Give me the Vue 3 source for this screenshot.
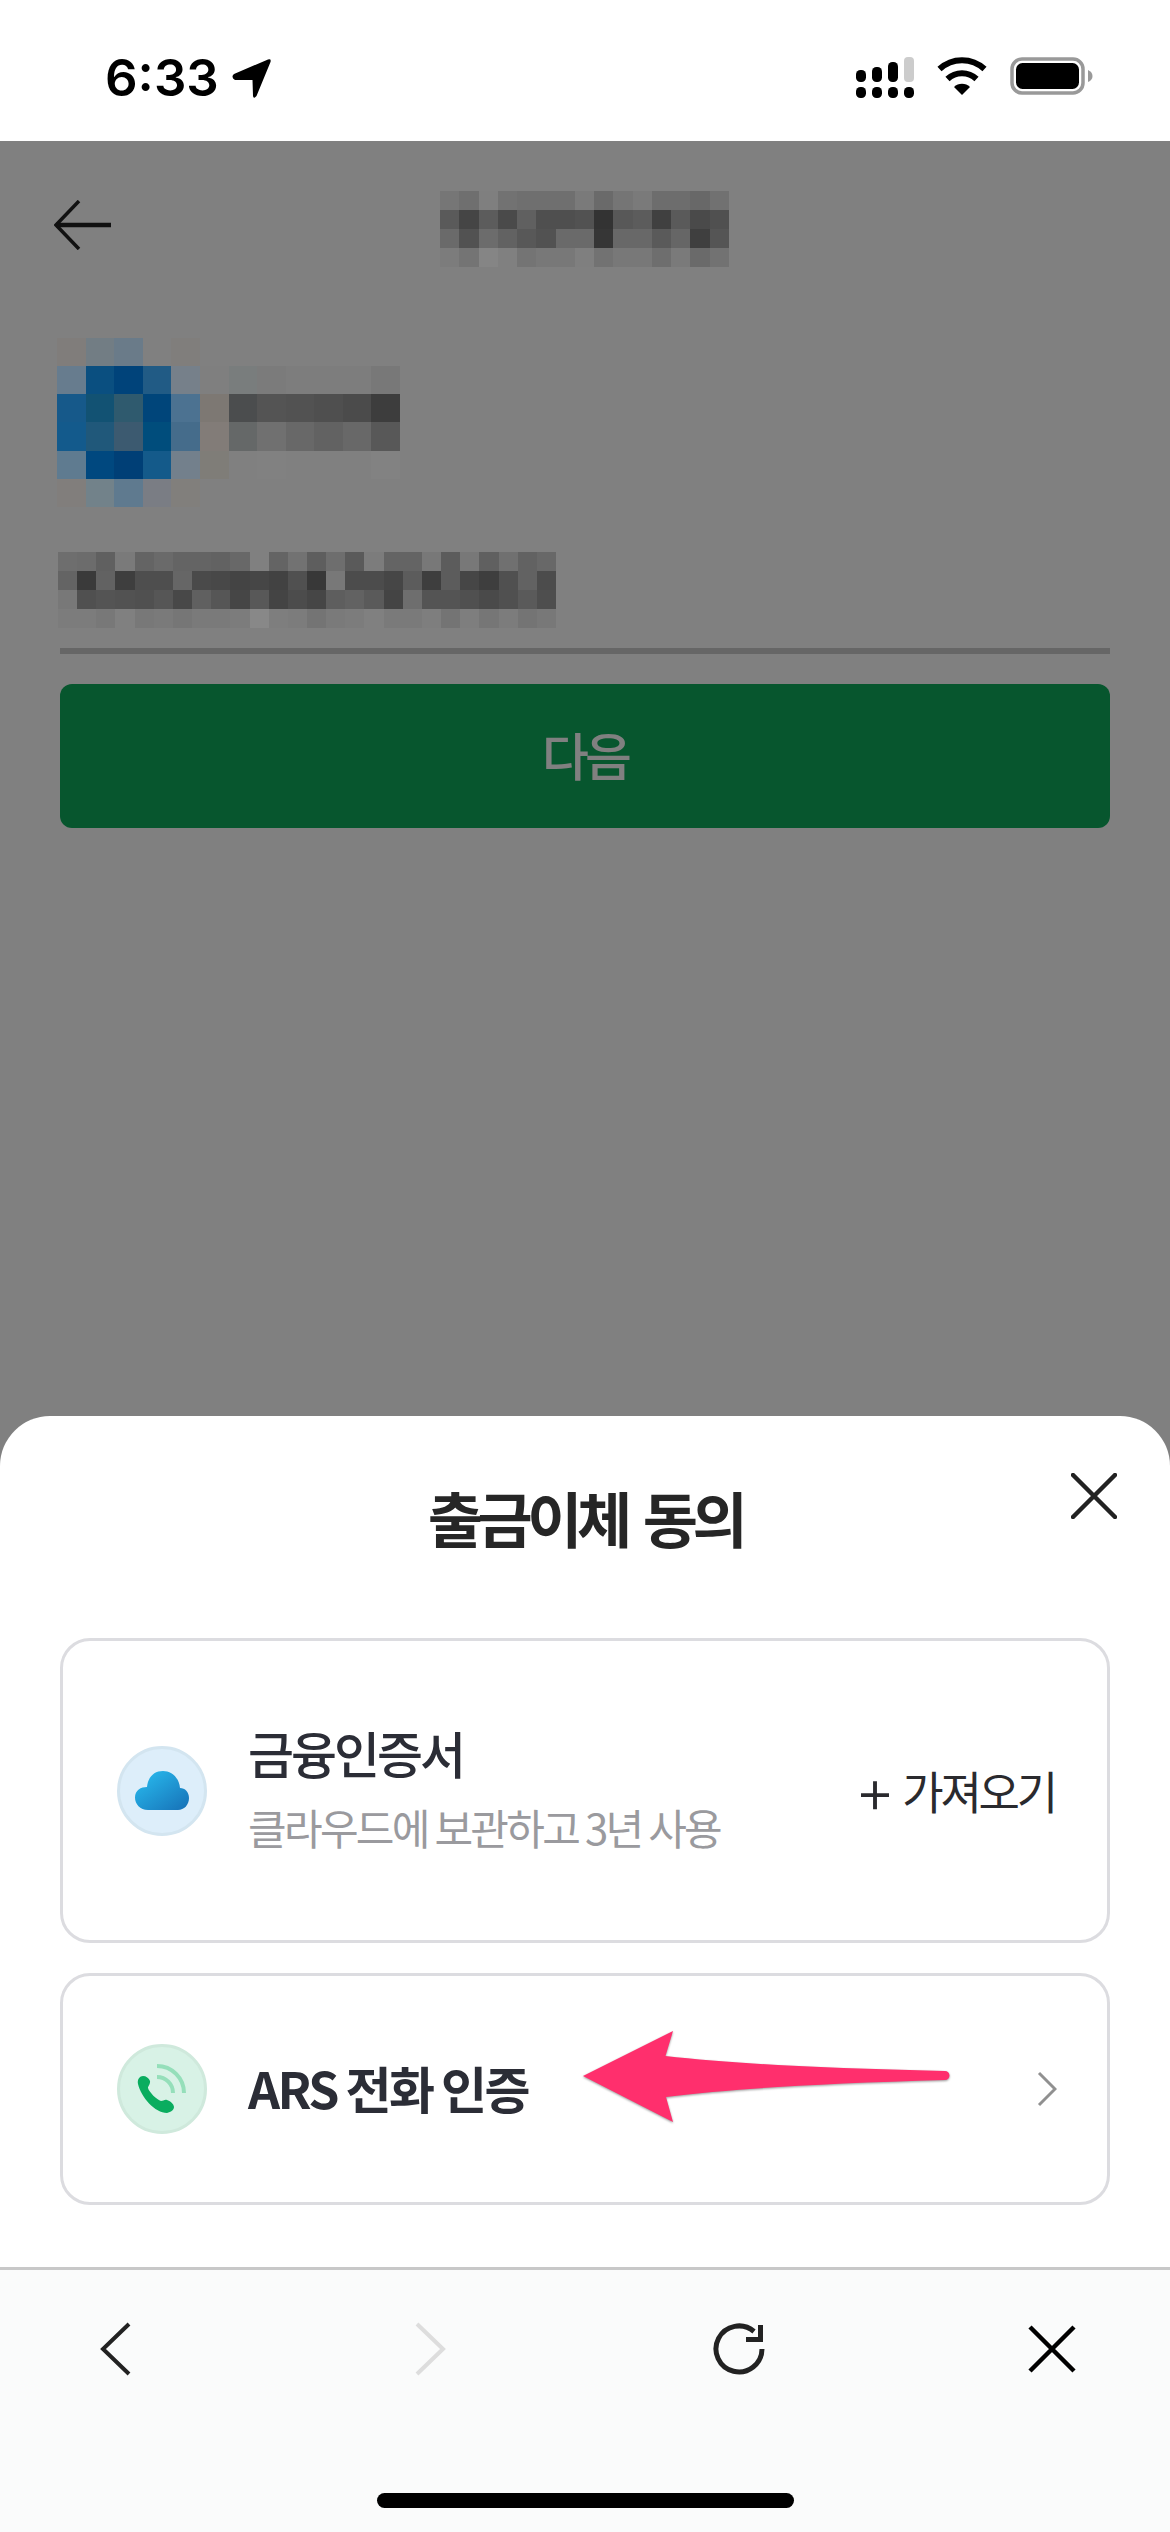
<template>
  <div class="phone">
    <div class="status">
      <div class="status-left">
        <span class="time">6:33</span>
        <svg class="loc" width="39" height="39" viewBox="0 0 39 39">
          <path d="M2 15 L36 0.5 Q39.5 -0.5 38.5 3 L24.5 37 Q21.5 40.5 21 37 L20.5 21 L3 21 Q-1.5 18 2 15Z" fill="#000" />
        </svg>
      </div>
      <div class="status-right">
        <svg width="59" height="42" viewBox="0 0 59 42">
          <rect x="1" y="13" width="10" height="12" rx="4.5" fill="#000" />
          <rect x="17" y="10" width="10" height="15" rx="4.5" fill="#000" />
          <rect x="33" y="5" width="10" height="20" rx="4.5" fill="#000" />
          <rect x="49" y="0" width="10" height="25" rx="4" fill="#ccc" />
          <rect x="1" y="30" width="10" height="11" rx="4.5" fill="#000" />
          <rect x="17" y="30" width="10" height="11" rx="4.5" fill="#000" />
          <rect x="33" y="30" width="10" height="11" rx="4.5" fill="#000" />
          <rect x="49" y="30" width="10" height="11" rx="4.5" fill="#000" />
        </svg>
        <svg width="50" height="38" viewBox="0 0 50 38">
          <path d="M2.5 12 A33 33 0 0 1 47.5 12" fill="none" stroke="#000" stroke-width="6" />
          <path d="M10.5 22 A21 21 0 0 1 39.5 22" fill="none" stroke="#000" stroke-width="6" />
          <path d="M17 30 A11.5 11.5 0 0 1 33 30 L25 38Z" fill="#000" />
        </svg>
        <svg width="83" height="38" viewBox="0 0 83 38">
          <rect x="2" y="2" width="71" height="34" rx="10" fill="none" stroke="#999" stroke-width="3.5" />
          <rect x="6" y="6" width="63" height="26" rx="6.5" fill="#000" />
          <path d="M78 13 Q82.5 15 82.5 19 Q82.5 23 78 25Z" fill="#999" />
        </svg>
      </div>
    </div>

    <div class="backdrop">
      <div class="top-bar">
        <svg class="back" width="57" height="50" viewBox="0 0 57 50">
          <path d="M25 1 L2 25 L25 49" fill="none" stroke="#111" stroke-width="3.5" />
          <path d="M2 25 H57" fill="none" stroke="#111" stroke-width="4.5" />
        </svg>
        <div class="mosaic title-blur" :style="{ gridTemplateColumns: `repeat(${titleCells[0].length}, 1fr)` }">
          <template v-for="(row, r) in titleCells" :key="r">
            <i v-for="(c, i) in row" :key="i" :style="{ background: c }"></i>
          </template>
        </div>
      </div>

      <div class="form">
        <div class="mosaic logo-blur" :style="{ gridTemplateColumns: `repeat(${logoCells[0].length}, 1fr)` }">
          <template v-for="(row, r) in logoCells" :key="r">
            <i v-for="(c, i) in row" :key="i" :style="{ background: c }"></i>
          </template>
        </div>
        <div class="mosaic input-blur" :style="{ gridTemplateColumns: `repeat(${inputCells[0].length}, 1fr)` }">
          <template v-for="(row, r) in inputCells" :key="r">
            <i v-for="(c, i) in row" :key="i" :style="{ background: c }"></i>
          </template>
        </div>
        <div class="underline"></div>
        <button class="next-btn" type="button">다음</button>
      </div>
    </div>

    <div class="sheet">
      <svg class="sheet-close" width="46" height="46" viewBox="0 0 46 46">
        <path d="M2 2 L44 44 M44 2 L2 44" fill="none" stroke="#222" stroke-width="4.5" stroke-linecap="round" />
      </svg>
      <h2 class="sheet-title">출금이체 동의</h2>

      <div class="option option-cert">
        <div class="badge badge-blue">
          <svg width="54" height="39" viewBox="0 0 54 39">
            <defs>
              <linearGradient id="cloudFill" x1="0" y1="0" x2="1" y2="1">
                <stop offset="0" stop-color="#2ac0f2" />
                <stop offset="1" stop-color="#1670b6" />
              </linearGradient>
            </defs>
            <path d="M13 39 C5 39 0 33 0 26.5 C0 19 6 16 12 16 C13 6 19 0 28 0 C36 0 44 6 45 17 C50 17 54 21 54 27 C54 34 49 39 43 39Z" fill="url(#cloudFill)" />
          </svg>
        </div>
        <div class="option-text">
          <div class="option-name">금융인증서</div>
          <div class="option-sub">클라우드에 보관하고 3년 사용</div>
        </div>
        <div class="import"><span class="plus">+</span>가져오기</div>
      </div>

      <div class="option option-ars">
        <div class="badge badge-green">
          <svg width="84" height="84" viewBox="3 3 84 84">
            <path d="M40 22 A27 27 0 0 1 67 49" fill="none" stroke="#95dfba" stroke-width="4" />
            <path d="M40 33 A16 16 0 0 1 56 49" fill="none" stroke="#95dfba" stroke-width="4" />
            <path d="M21 40 C20 35 23 32 26 32 C29 32 32 34 33 37 C33.5 40 31 42 31 44 C32 48 40 56 44 57 C46 57 48 55 50 56 C53 57 57 60 57 63 C57 66 54 68 50 69 C38 69 24 53 21 40Z" fill="#0aad5f" />
          </svg>
        </div>
        <div class="option-name ars-name">ARS 전화 인증</div>
        <svg class="chevron" width="20" height="36" viewBox="0 0 20 36">
          <path d="M2 2 L18 18 L2 34" fill="none" stroke="#909090" stroke-width="3" />
        </svg>
        <svg class="pink-arrow" width="375" height="98" viewBox="580 2029 375 98">
          <path d="M583 2077 L673 2032 L665.5 2057 Q760 2068 945 2072 A4.5 4.5 0 0 1 945 2081 Q760 2086 666 2098 L673 2123Z" fill="#ff2f6d" />
        </svg>
      </div>
    </div>

    <div class="toolbar">
      <div class="tool-row">
        <svg width="60" height="60" viewBox="0 0 60 60">
          <path d="M43 5 L17 30 L43 55" fill="none" stroke="#222" stroke-width="4" />
        </svg>
        <svg width="60" height="60" viewBox="0 0 60 60">
          <path d="M19 5 L45 30 L19 55" fill="none" stroke="#ddd" stroke-width="4" />
        </svg>
        <svg width="60" height="60" viewBox="0 0 60 60">
          <path d="M52 30 A23 23 0 1 1 44 12.5" fill="none" stroke="#222" stroke-width="5" />
          <path d="M36 20.5 H50.5 V6" fill="none" stroke="#222" stroke-width="5" />
        </svg>
        <svg width="60" height="60" viewBox="0 0 60 60">
          <path d="M8 8 L52 52 M52 8 L8 52" fill="none" stroke="#000" stroke-width="4.5" />
        </svg>
      </div>
      <div class="home-bar"></div>
    </div>
  </div>
</template>

<script setup>
const grey = (list) => list.map((v) => `#${v}${v}${v}`)

// pixelated placeholders
const titleCells = [
  grey(['76', '6f', '7f', '72', '6f', '6f', '6f', '7a', '6a', '75', '7a', '6d', '6d', '68', '71']),
  grey(['5a', '45', '5c', '4a', '60', '4f', '4f', '52', '33', '58', '5c', '40', '5a', '4a', '50']),
  grey(['6a', '52', '6c', '62', '58', '52', '6a', '6a', '36', '68', '68', '5a', '66', '3f', '55']),
  grey(['7c', '74', '85', '80', '74', '78', '78', '7f', '72', '78', '78', '6e', '7a', '6a', '72'])
]

const logoCells = [
  ['#807d7b', '#727d84', '#6a7b89', '#808080', '#807e7c', '#808080', '#808080', '#808080', '#808080', '#808080', '#808080', '#808080'],
  ['#677c8e', '#0a4f80', '#00437a', '#215b85', '#76808a', '#7f7f7f', '#797d7d', '#7b7b7b', '#7d7d7d', '#7d7d7d', '#7d7d7d', '#787878'],
  ['#16598a', '#125273', '#2f5a6e', '#00457a', '#4c7291', '#7d7873', '#4b4d4e', '#545454', '#525252', '#4f4f4f', '#4b4b4b', '#3d3d3d'],
  ['#135a8c', '#20587a', '#3c5a70', '#004d7c', '#456c8b', '#827c78', '#656868', '#707070', '#686868', '#626262', '#686868', '#585858'],
  ['#5f7b90', '#00487f', '#003f76', '#145a8a', '#73808c', '#7f7d78', '#808080', '#818181', '#808080', '#808080', '#808080', '#828282'],
  ['#817e7c', '#72828a', '#5f7a8f', '#7a7d84', '#817f7c', '#808080', '#808080', '#808080', '#808080', '#808080', '#808080', '#808080']
]

const inputCells = [
  grey(['6e', '6c', '60', '7a', '64', '6a', '64', '64', '62', '68', '80', '64', '72', '5e', '6e', '5a', '7c', '64', '64', '78', '5c', '78', '60', '70', '62', '68']),
  grey(['64', '3a', '62', '3e', '4e', '4e', '66', '4a', '48', '44', '46', '42', '50', '38', '78', '4c', '4c', '46', '5c', '3e', '5c', '46', '3e', '50', '62', '4c']),
  grey(['78', '50', '54', '52', '50', '56', '48', '60', '56', '46', '58', '44', '4c', '46', '5e', '62', '5a', '44', '6e', '54', '54', '50', '4a', '50', '5a', '4e']),
  grey(['7c', '7c', '78', '80', '78', '7a', '76', '7a', '7a', '7c', '88', '7e', '7c', '74', '7a', '7c', '80', '7a', '7a', '7e', '74', '7e', '76', '7c', '74', '78'])
]
</script>

<style scoped>
.phone {
  width: 1170px;
  height: 2532px;
  display: flex;
  flex-direction: column;
  background: #808080;
  font-family: "Noto Sans CJK KR", "Noto Sans", sans-serif;
  overflow: hidden;
}

.status {
  height: 141px;
  flex: none;
  background: #fff;
  display: flex;
  justify-content: space-between;
  align-items: flex-start;
  padding: 57px 77px 0 105px;
  box-sizing: border-box;
}

.status-left {
  display: flex;
  align-items: center;
  gap: 13px;
}

.time {
  font-family: Inter, sans-serif;
  font-size: 51px;
  font-weight: 600;
  line-height: 42px;
  color: #000;
}

.status-right {
  display: flex;
  align-items: flex-start;
  gap: 23px;
}

.backdrop {
  flex: 1;
}

.top-bar {
  display: flex;
  padding: 50px 0 0 54px;
}

.back {
  margin-top: 9px;
  margin-right: 329px;
}

.mosaic {
  display: grid;
}

.mosaic i {
  display: block;
}

.title-blur {
  width: 289px;
  height: 76px;
  grid-auto-rows: 19px;
}

.form {
  padding: 71px 60px 0;
}

.logo-blur {
  width: 343px;
  height: 169px;
  margin-left: -3px;
  grid-auto-rows: 1fr;
}

.input-blur {
  width: 498px;
  height: 76px;
  margin-top: 45px;
  margin-left: -2px;
  grid-auto-rows: 19px;
}

.underline {
  height: 6px;
  margin-top: 20px;
  background: #666;
}

.next-btn {
  display: block;
  width: 100%;
  height: 144px;
  margin-top: 30px;
  padding: 0 0 5px;
  border: none;
  border-radius: 12px;
  background: #07562e;
  color: #808080;
  font-family: inherit;
  font-size: 51px;
  font-weight: 500;
  letter-spacing: -4px;
}

.sheet {
  position: relative;
  flex: none;
  background: #fff;
  border-radius: 50px 50px 0 0;
  padding: 66px 60px 62px;
}

.sheet-close {
  position: absolute;
  top: 57px;
  right: 53px;
}

.sheet-title {
  margin: 0 0 86px;
  text-align: center;
  font-size: 60px;
  line-height: 70px;
  font-weight: 700;
  letter-spacing: -5.5px;
  word-spacing: 8px;
  color: #262626;
}

.option {
  position: relative;
  display: flex;
  align-items: center;
  box-sizing: border-box;
  border: 3px solid #dcdce0;
  border-radius: 30px;
  padding: 0 52px 0 54px;
  background: #fff;
}

.option-cert {
  height: 305px;
}

.option-ars {
  height: 232px;
  margin-top: 30px;
}

.badge {
  width: 90px;
  height: 90px;
  flex: none;
  box-sizing: border-box;
  border-radius: 50%;
  border: 3px solid;
  display: flex;
  align-items: center;
  justify-content: center;
}

.badge-blue {
  background: #ddeefa;
  border-color: #d3e5f0;
}

.badge-green {
  background: #d8f2e6;
  border-color: #cfe9dc;
}

.option-text {
  margin-left: 41px;
  padding-bottom: 7px;
  flex: 1;
}

.option-name {
  font-size: 50px;
  line-height: 70px;
  font-weight: 500;
  letter-spacing: -3px;
  color: #2b2d36;
}

.option-sub {
  margin-top: 10px;
  font-size: 42px;
  line-height: 60px;
  letter-spacing: -2.7px;
  color: #9a9a9e;
}

.import {
  display: flex;
  align-items: center;
  font-size: 45px;
  line-height: 60px;
  letter-spacing: -3.2px;
  color: #2a2a2e;
}

.plus {
  font-family: Inter, sans-serif;
  font-size: 62px;
  font-weight: 300;
  margin-right: 7px;
  letter-spacing: 0;
}

.ars-name {
  margin-left: 41px;
  padding-bottom: 4px;
  flex: 1;
  font-weight: 700;
  letter-spacing: -2.6px;
}

.chevron {
  flex: none;
  margin-right: -2px;
}

.pink-arrow {
  position: absolute;
  left: 517px;
  top: 52px;
  filter: drop-shadow(0 1px 1px rgba(0, 0, 0, 0.4));
}

.toolbar {
  height: 265px;
  flex: none;
  box-sizing: border-box;
  border-top: 3px solid #c8c8c8;
  background: #fafbfb;
  display: flex;
  flex-direction: column;
}

.tool-row {
  display: flex;
  justify-content: space-between;
  padding: 49px 88px 0 86px;
}

.home-bar {
  width: 417px;
  height: 15px;
  border-radius: 8px;
  background: #000;
  margin: auto auto 24px;
}
</style>
